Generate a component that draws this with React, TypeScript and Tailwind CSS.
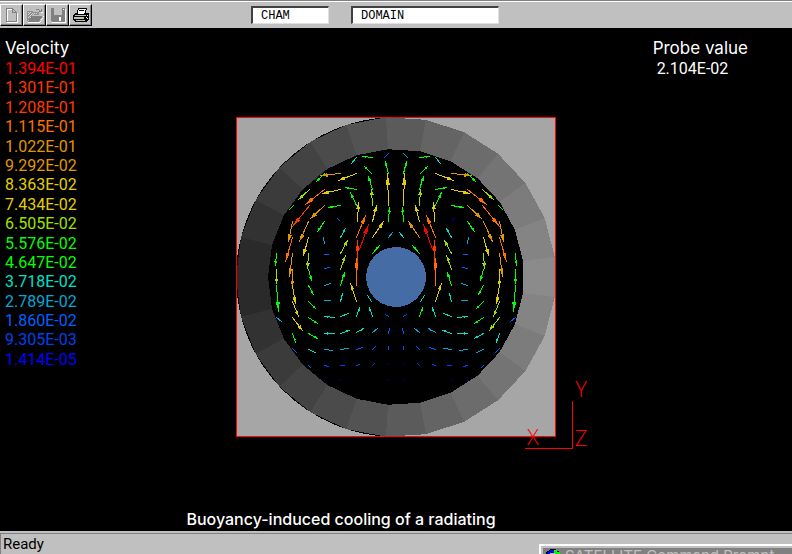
import type { ReactNode } from "react";

type Vector = [number, number, number, number, string, string?];

interface LegendEntry {
  value: string;
  className: string;
}

const legend: LegendEntry[] = [
  { value: "1.394E-01", className: "text-[#ff0000]" },
  { value: "1.301E-01", className: "text-[#ff3800]" },
  { value: "1.208E-01", className: "text-[#ff3800]" },
  { value: "1.115E-01", className: "text-[#ff7000]" },
  { value: "1.022E-01", className: "text-[#e09800]" },
  { value: "9.292E-02", className: "text-[#e09800]" },
  { value: "8.363E-02", className: "text-[#e0d000]" },
  { value: "7.434E-02", className: "text-[#e0d000]" },
  { value: "6.505E-02", className: "text-[#a0e000]" },
  { value: "5.576E-02", className: "text-[#00ff00]" },
  { value: "4.647E-02", className: "text-[#00ff00]" },
  { value: "3.718E-02", className: "text-[#00e0c8]" },
  { value: "2.789E-02", className: "text-[#00a8d8]" },
  { value: "1.860E-02", className: "text-[#0060ff]" },
  { value: "9.305E-03", className: "text-[#0040f0]" },
  { value: "1.414E-05", className: "text-[#0000ff]" },
];

const RED = "#ff0000";
const SCARLET = "#ff3800";
const ORANGE = "#ff7000";
const AMBER = "#e09800";
const YELLOW = "#e0d000";
const LIME = "#a0e000";
const GREEN = "#00ff00";
const CYAN = "#00e0c8";
const SKY = "#00a8d8";
const BLUE = "#0060ff";
const NAVY = "#0040f0";
const DEEP = "#0000ff";

const CX = 396;
const CY = 277;

// tail x, tail y, head x, head y, colour, colour on the mirrored side
const vectors: Vector[] = [
  [372, 157, 362, 156, GREEN],
  [356, 157, 351, 163, CYAN],
  [388, 153, 384, 157, BLUE, SKY],
  [340, 173, 320, 175, AMBER],
  [356, 173, 338, 180, YELLOW],
  [324, 173, 316, 181, GREEN],
  [371, 173, 364, 166, GREEN],
  [388, 173, 385, 161, GREEN],
  [309, 189, 298, 199, LIME],
  [324, 189, 305, 204, ORANGE],
  [340, 189, 322, 193, YELLOW],
  [356, 189, 345, 187, GREEN],
  [372, 189, 368, 176, GREEN],
  [388, 205, 387, 173, YELLOW],
  [372, 205, 371, 189, LIME],
  [293, 205, 289, 209, GREEN],
  [309, 205, 292, 226, SCARLET, ORANGE],
  [324, 205, 310, 218, AMBER],
  [340, 205, 328, 207, GREEN],
  [356, 205, 350, 192, GREEN],
  [292, 221, 288, 241, AMBER],
  [308, 221, 299, 241, AMBER],
  [324, 221, 317, 231, GREEN],
  [337, 218, 339, 220, BLUE, DEEP],
  [357, 221, 358, 202, YELLOW],
  [372, 221, 376, 205, YELLOW],
  [388, 221, 389, 207, GREEN],
  [292, 237, 285, 261, ORANGE],
  [308, 237, 303, 255, YELLOW],
  [324, 243, 323, 237, SKY],
  [340, 237, 345, 228, CYAN],
  [356, 237, 365, 215, ORANGE],
  [372, 237, 383, 221, YELLOW, AMBER],
  [388, 237, 392, 232, SKY, CYAN],
  [276, 253, 275, 265, GREEN],
  [292, 253, 289, 276, AMBER],
  [308, 253, 307, 268, LIME],
  [328, 254, 324, 254, BLUE],
  [340, 253, 347, 240, LIME],
  [359, 249, 368, 224, RED],
  [372, 253, 379, 245, GREEN],
  [276, 269, 276, 283, LIME, GREEN],
  [292, 269, 292, 286, AMBER, YELLOW],
  [308, 269, 311, 280, GREEN],
  [329, 267, 324, 268, BLUE],
  [340, 269, 345, 255, LIME],
  [357, 269, 357, 240, SCARLET],
  [276, 285, 278, 311, GREEN],
  [292, 285, 295, 303, YELLOW],
  [308, 285, 313, 294, GREEN],
  [330, 283, 324, 285, SKY],
  [340, 285, 344, 272, GREEN],
  [356, 285, 356, 258, ORANGE],
  [276, 317, 281, 321, SKY, BLUE],
  [292, 301, 298, 316, YELLOW, LIME],
  [308, 301, 315, 308, GREEN],
  [330, 300, 324, 300, SKY],
  [340, 301, 342, 293, CYAN],
  [356, 301, 350, 283, YELLOW],
  [371, 301, 367, 295, CYAN],
  [292, 317, 302, 330, YELLOW, LIME],
  [308, 317, 317, 323, GREEN],
  [334, 317, 324, 316, CYAN],
  [340, 316, 348, 313, CYAN],
  [356, 316, 359, 307, CYAN],
  [372, 316, 369, 307, CYAN, GREEN],
  [388, 316, 385, 314, BLUE],
  [292, 333, 295, 342, GREEN, CYAN],
  [308, 333, 317, 338, GREEN, CYAN],
  [334, 333, 324, 333, CYAN],
  [340, 333, 349, 330, CYAN],
  [356, 332, 363, 328, CYAN, SKY],
  [372, 332, 377, 328, SKY],
  [388, 333, 389, 328, BLUE],
  [292, 348, 296, 352, BLUE],
  [308, 349, 315, 352, CYAN, SKY],
  [324, 349, 332, 350, SKY],
  [340, 349, 348, 348, SKY],
  [356, 349, 362, 347, BLUE],
  [372, 349, 375, 346, BLUE],
  [388, 349, 388, 346, BLUE],
  [308, 365, 310, 367, BLUE],
  [324, 365, 328, 366, NAVY],
  [340, 365, 344, 365, NAVY],
  [356, 365, 359, 364, NAVY],
  [372, 365, 374, 363, NAVY],
  [388, 364, 388, 364, DEEP],
  [324, 380, 324, 380, DEEP],
  [340, 380, 340, 380, DEEP],
  [388, 380, 388, 380, DEEP],
];

const SECTORS = 25;

// Shades run from the left of the wall round to the right
const shades = [
  "#2a2a2a",
  "#323232",
  "#3b3b3b",
  "#434343",
  "#4b4b4b",
  "#535353",
  "#5b5b5b",
  "#646464",
  "#6c6c6c",
  "#747474",
  "#7c7c7c",
  "#848484",
  "#8b8b8b",
];

function point(radius: number, step: number) {
  const angle = Math.PI + (step * 2 * Math.PI) / SECTORS;
  return `${CX + radius * Math.cos(angle)},${CY + radius * Math.sin(angle)}`;
}

function Wall() {
  return (
    <g shapeRendering="crispEdges">
      {Array.from({ length: SECTORS }, (_, i) => (
        <polygon
          key={i}
          points={[
            point(160, i),
            point(160, i + 1),
            point(128, i + 1),
            point(128, i),
          ].join(" ")}
          fill={shades[Math.min(i, SECTORS - 1 - i)]}
        />
      ))}
    </g>
  );
}

function Arrow({ vector, mirrored }: { vector: Vector; mirrored?: boolean }) {
  const [tx, ty, hx, hy, left, right] = vector;
  const color = mirrored ? (right ?? left) : left;
  const x1 = (mirrored ? 2 * CX - tx - 1 : tx) + 0.5;
  const x2 = (mirrored ? 2 * CX - hx - 1 : hx) + 0.5;
  const y1 = ty + 0.5;
  const y2 = hy + 0.5;
  const length = Math.hypot(x2 - x1, y2 - y1) || 1;
  const ux = (x2 - x1) / length;
  const uy = (y2 - y1) / length;
  const head = length * 0.35;
  const bx = x2 - ux * head;
  const by = y2 - uy * head;
  const half = Math.min(2, length * 0.12);

  return (
    <g stroke={color} fill={color} shapeRendering="crispEdges">
      <line x1={x1} y1={y1} x2={x2} y2={y2} strokeLinecap="square" />
      {length > 8 && (
        <polygon
          points={`${x2},${y2} ${bx - uy * half},${by + ux * half} ${bx + uy * half},${by - ux * half}`}
          stroke="none"
        />
      )}
    </g>
  );
}

function FlowPlot() {
  return (
    <svg
      viewBox="196 117 400 334"
      className="block h-[334px] w-[400px]"
      role="img"
      aria-label="Velocity vectors"
    >
      <g shapeRendering="crispEdges">
        <rect x="236" y="117" width="320" height="320" fill="#a6a6a6" />
        <path d="M396 117A160 160 0 0 0 396 437Z" fill="#000" />
        <circle cx={CX} cy={CY} r="128" fill="#000" />
      </g>
      <Wall />
      <rect
        x="236.5"
        y="117.5"
        width="319"
        height="319"
        fill="none"
        stroke="#ff0000"
        shapeRendering="crispEdges"
      />
      <polygon
        points={Array.from({ length: SECTORS }, (_, i) => point(30, i)).join(" ")}
        fill="#466ca5"
        shapeRendering="crispEdges"
      />
      {vectors.map((vector, i) => (
        <g key={i}>
          <Arrow vector={vector} />
          <Arrow vector={vector} mirrored />
        </g>
      ))}
      <path
        d="M525 448.5H572.5V401"
        fill="none"
        stroke="#ff0000"
        shapeRendering="crispEdges"
      />
      <g
        fill="#ff0000"
        textAnchor="middle"
        className="font-['Open_Sans',sans-serif] text-[22px] font-light"
      >
        <text x="533" y="445">X</text>
        <text x="581" y="397">Y</text>
        <text x="581" y="446">Z</text>
      </g>
    </svg>
  );
}

interface ToolButtonProps {
  label: string;
  disabled?: boolean;
  children: ReactNode;
}

function ToolButton({ label, disabled, children }: ToolButtonProps) {
  return (
    <button
      type="button"
      aria-label={label}
      disabled={disabled}
      className="flex h-[22px] w-[23px] items-center justify-center border border-t-white border-r-black border-b-black border-l-white bg-[#c0c0c0] shadow-[inset_-1px_-1px_0_#808080]"
    >
      <svg viewBox="0 0 18 16" className="h-4 w-[18px]" shapeRendering="crispEdges">
        {children}
      </svg>
    </button>
  );
}

function Toolbar() {
  return (
    <header className="flex h-7 border-t border-[#808080] bg-[#c0c0c0]">
      <div className="flex flex-1 items-start border-t border-white pt-0.5">
        <div className="flex w-[251px]">
          <ToolButton label="New" disabled>
            <path d="M4.5 2.5h6l4 4v9h-10z" fill="none" stroke="#fff" />
            <path
              d="M3.5 1.5h6l4 4v9h-10zM9.5 1.5v4h4"
              fill="none"
              stroke="#808080"
            />
          </ToolButton>
          <ToolButton label="Open" disabled>
            <path d="M2 15h12l4-7v1l-4 7H2zM15 5h2v1h-2z" fill="#fff" />
            <path d="M1 4h5l1 1h6v3H6l-4 6H1z" fill="#909090" />
            <path d="M2 14.5 6 8.5h11l-4 6z" fill="#808080" />
            <path
              d="M2 5.5h1M4 5.5h1M6 6.5h1M8 6.5h1M10 6.5h1M3 6.5h1M5 7.5h1M7 7.5h1M2 7.5h1M4 8.5h1M3 9.5h1M2 10.5h1"
              stroke="#d8d8d8"
            />
            <path d="M10 2.5h3M13 3.5h1M15.5 2v3M13 4.5h3" stroke="#808080" />
          </ToolButton>
          <ToolButton label="Save" disabled>
            <path d="M3 15h13V2h1v14H3z" fill="#fff" />
            <path d="M2 1h14v14H3l-1-1z" fill="#808080" />
            <path d="M5 1h8v7H5z" fill="#c0c0c0" />
            <path d="M14 2h1v1h-1zM10 10h2v4h-2z" fill="#fff" />
          </ToolButton>
          <ToolButton label="Print">
            <path d="M6.5 1.5h8l-2 6h-8z" fill="#fff" stroke="#000" />
            <path d="M7 3.5h5M6 5.5h5" stroke="#000" />
            <path d="M1 8l3-2h12l1 1v5l-3 3H3l-2-2z" fill="#000" />
            <path d="M6 5h6v2H6z" fill="#fff" />
            <path d="M3 8h11v1H3zM2 10h10v1H2zM4 13h9v1H4z" fill="#c0c0c0" />
            <path d="M15 8h1v1h-1zM14 10h1v1h-1zM15 11h1v1h-1z" fill="#fff" />
            <path d="M2 11h7v1H2z" fill="#c0c0c0" />
            <path d="M9 11h3v1H9z" fill="#e0d000" />
          </ToolButton>
        </div>
        <input
          type="text"
          aria-label="Project"
          defaultValue="CHAM"
          className="mt-0.5 h-[18px] w-[78px] border-t-2 border-r border-b border-l-2 border-t-[#404040] border-r-[#e0e0e0] border-b-[#e0e0e0] border-l-[#404040] bg-white pl-2 font-['Liberation_Mono',monospace] text-xs leading-none text-black outline-none"
        />
        <input
          type="text"
          aria-label="Object"
          defaultValue="DOMAIN"
          className="mt-0.5 ml-[22px] h-[18px] w-[148px] border-t-2 border-r border-b border-l-2 border-t-[#404040] border-r-[#e0e0e0] border-b-[#e0e0e0] border-l-[#404040] bg-white pl-2 font-['Liberation_Mono',monospace] text-xs leading-none text-black outline-none"
        />
      </div>
    </header>
  );
}

function Legend() {
  return (
    <section className="pt-2.5 pl-[5px]">
      <h2 className="text-[17px] leading-[21px] text-white">Velocity</h2>
      <ol className="flex h-[310px] flex-col justify-between font-['Roboto',sans-serif] text-base leading-[19px]">
        {legend.map((entry) => (
          <li key={entry.value} className={entry.className}>
            {entry.value}
          </li>
        ))}
      </ol>
    </section>
  );
}

function Probe() {
  return (
    <section className="justify-self-end pt-2.5 pr-11 text-white">
      <h2 className="text-[17px] leading-[21px]">Probe value</h2>
      <p className="pl-1 font-['Roboto',sans-serif] text-base leading-[19px]">
        2.104E-02
      </p>
    </section>
  );
}

function StatusBar() {
  return (
    <footer className="relative h-[23px] border-t-2 border-[#c0c0c0] bg-[#c0c0c0]">
      <p className="h-full border-t border-l border-[#808080] pl-0.5 font-['Roboto',sans-serif] text-[15px] leading-5 text-black">
        Ready
      </p>
      <div className="absolute top-[11px] right-0 h-2.5 w-[253px] overflow-hidden border-t-2 border-l-2 border-white bg-[#c0c0c0] pt-0.5 pl-0.5">
        <div className="flex h-5 items-start gap-1 bg-[#808080] pl-0.5 text-[#c0c0c0]">
          <svg viewBox="0 0 16 16" className="h-4 w-4" shapeRendering="crispEdges">
            <circle cx="8" cy="9" r="8" fill="#000" />
            <path d="M1 9a7 7 0 0 1 8-7v5H6v4z" fill="#0000ff" />
            <path d="M9 2h3v2h3v7H9z" fill="#00ff00" />
            <path d="M5 5h5v5H5z" fill="#c0c0c0" />
          </svg>
          <span className="text-[15px] leading-4 whitespace-nowrap">
            SATELLITE Command Prompt
          </span>
        </div>
      </div>
    </footer>
  );
}

export default function App() {
  return (
    <div className="flex min-h-screen flex-col overflow-hidden bg-black font-['Inter',sans-serif]">
      <Toolbar />
      <main className="flex flex-1 flex-col">
        <div className="grid grid-cols-[1fr_auto_1fr]">
          <Legend />
          <div className="pt-[89px]">
            <FlowPlot />
          </div>
          <Probe />
        </div>
        <p className="mt-auto pr-[110px] pb-0.5 text-center text-base leading-5 font-medium text-white">
          Buoyancy-induced cooling of a radiating
        </p>
      </main>
      <StatusBar />
    </div>
  );
}
